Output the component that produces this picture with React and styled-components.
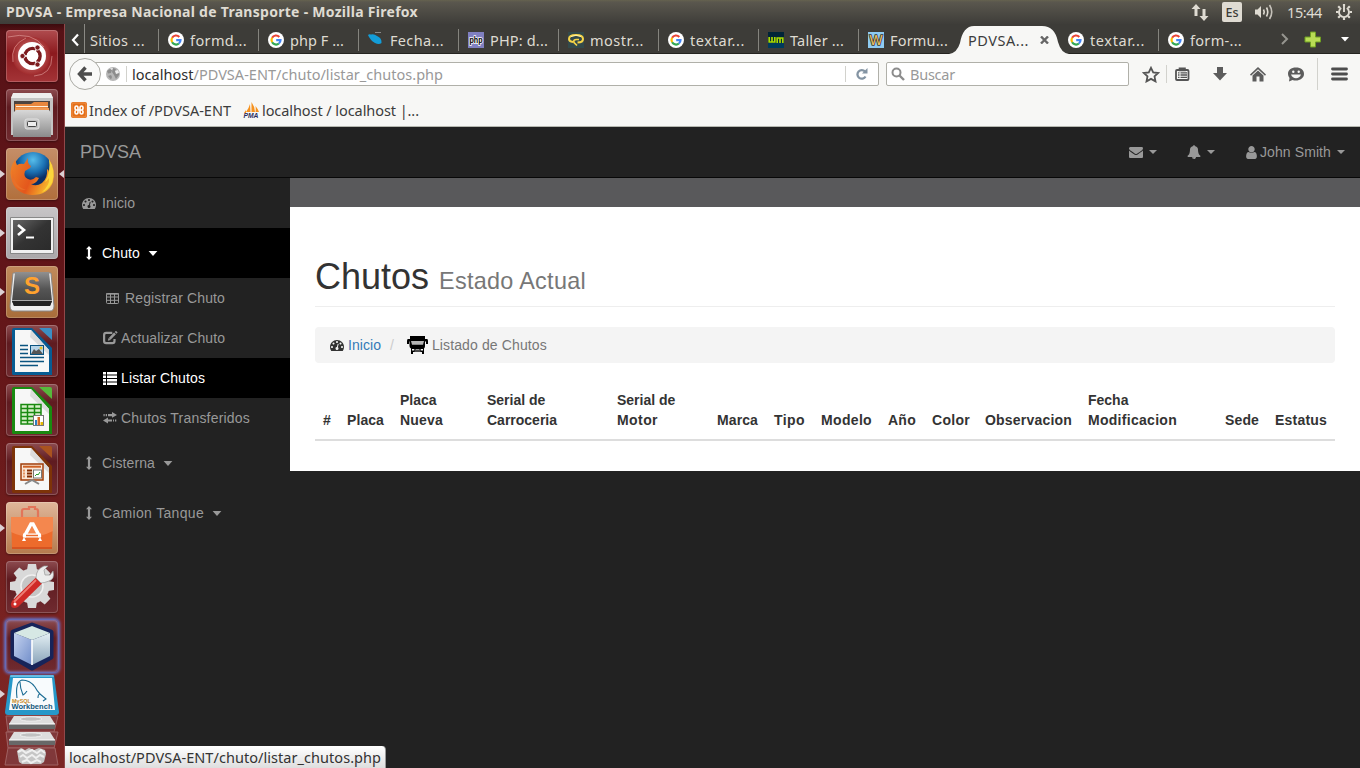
import React, { useLayoutEffect, useRef, useState } from "react";
import styled, { createGlobalStyle } from "styled-components";

const Global = createGlobalStyle`
  * { box-sizing: border-box; }
  html, body { margin: 0; padding: 0; overflow: hidden; background: #222; }
  body { font-family: "Liberation Sans", Arial, sans-serif; font-size: 14px; line-height: 20px; color: #333; }
  svg { display: block; flex: none; }
`;

const UI = `"Noto Sans", "Open Sans", sans-serif`;

const FitSpan = styled.span`
  display: inline-block;
  white-space: pre;
  flex: none;
`;

/* Spreads its letters so that the label occupies the given width. */
function Fit({ w, children, ...rest }) {
  const ref = useRef(null);
  const [ls, setLs] = useState(0);
  useLayoutEffect(() => {
    const natural = ref.current.getBoundingClientRect().width;
    setLs((w - natural) / ref.current.textContent.length);
  }, []);
  return (
    <FitSpan ref={ref} style={{ letterSpacing: ls }} {...rest}>
      {children}
    </FitSpan>
  );
}

/* ---------- desktop shell ---------- */
const Desktop = styled.div`
  width: 1360px;
  height: 768px;
  display: flex;
  flex-direction: column;
  background: #222;
  position: relative;
`;
const TopPanel = styled.header`
  height: 24px;
  flex: none;
  display: flex;
  align-items: center;
  justify-content: space-between;
  padding: 0 8px 0 6px;
  background: linear-gradient(#65624f 0, #5a574e 2px, #3e3d39 100%);
  color: #dfdbd2;
  font-family: ${UI};
  font-size: 14.5px;
`;
const PanelTitle = styled.div`
  font-weight: 700;
  font-size: 14px;
  color: #dfdbd2;
`;
const Indicators = styled.div`
  display: flex;
  align-items: center;
`;
const Keyboard = styled.div`
  width: 20px;
  height: 20px;
  margin: 0 12px 0 13px;
  border-radius: 2px;
  background: #dfdbd2;
  color: #3c3b37;
  font-size: 12.5px;
  font-weight: 500;
  line-height: 21px;
  text-align: center;
`;
const Clock = styled.div`
  margin: 0 14px 0 12px;
`;
const Body = styled.div`
  display: flex;
  height: 744px;
`;

/* ---------- launcher ---------- */
const Launcher = styled.aside`
  width: 65px;
  flex: none;
  padding: 6px 0 0 6px;
  display: flex;
  flex-direction: column;
  gap: 7px;
  border-right: 1px solid #91484a;
  background: linear-gradient(#3c0b0e 0, #571216 7px, #5f1519 25%, #661719 50%, #7b2422 85%, #7b2624 100%);
`;
const Tile = styled.div`
  position: relative;
  width: 52px;
  height: 52px;
  flex: none;
  border-radius: 4px;
  background: ${(p) => p.$bg || "linear-gradient(#8d4c50, #5f1b20 35%, #702b30)"};
  box-shadow: ${(p) =>
    p.$glow
      ? "inset 0 0 3px #8aa0ff, 0 0 3px 2px #6276cf"
      : "inset 0 0 0 1px rgba(255,255,255,.2), 0 1px 2px rgba(0,0,0,.35)"};
  svg { width: 52px; height: 52px; }
`;
const Pip = styled.i`
  position: absolute;
  top: 22px;
  ${(p) => (p.$right ? "right: -6px; border-right: 5px solid #dcd0d4;" : "left: -6px; border-left: 5px solid #dcd0d4;")}
  border-top: 4px solid transparent;
  border-bottom: 4px solid transparent;
`;
const Folded = styled.div`
  margin: -6px 0 0 -3px;
  height: 95px;
  svg { overflow: visible; }
`;

/* ---------- firefox chrome ---------- */
const Browser = styled.main`
  width: 1295px;
  display: flex;
  flex-direction: column;
`;
const TabStrip = styled.div`
  height: 30px;
  flex: none;
  display: flex;
  background: #3d3c38;
  border-bottom: 1px solid #252420;
  font-family: ${UI};
  font-size: 14.5px;
  color: #dfdbd2;
`;
const ScrollLeft = styled.div`
  width: 20px;
  display: flex;
  align-items: center;
  padding: 2px 0 0 6px;
  border-right: 1px solid #8a8984;
`;
const Tab = styled.div`
  position: relative;
  width: ${(p) => p.$w || 100}px;
  display: flex;
  align-items: center;
  gap: 6px;
  padding: 2px 0 0 ${(p) => p.$pad ?? 9}px;
  color: ${(p) => (p.$active ? "#3c3c3c" : "#dfdbd2")};
  &::after {
    content: "";
    position: absolute;
    right: 0;
    top: 5px;
    width: 1px;
    height: 22px;
    background: ${(p) => (p.$line ? "#85847e" : "transparent")};
  }
  > * { position: relative; }
`;
const TabShape = styled.svg`
  && { position: absolute; left: -10px; top: 2px; }
`;
const TabTools = styled.div`
  flex: 1;
  display: flex;
  align-items: center;
  padding: 1px 0 0 21px;
`;
const Chrome = styled.div`
  height: 73px;
  flex: none;
  background: #f7f7f5;
  border-bottom: 1px solid #b6b8b0;
  font-family: ${UI};
  font-size: 14.5px;
  color: #3c3c3c;
`;
const NavRow = styled.div`
  height: 40px;
  display: flex;
  align-items: center;
  padding-left: 4px;
`;
const Back = styled.div`
  position: relative;
  z-index: 1;
  width: 32px;
  height: 32px;
  border: 1px solid #aaaaa4;
  border-radius: 50%;
  background: #f9f9f8;
  display: flex;
  align-items: center;
  justify-content: center;
`;
const Field = styled.div`
  height: 24px;
  width: ${(p) => p.$w}px;
  margin-left: ${(p) => p.$ml}px;
  display: flex;
  align-items: center;
  padding-left: ${(p) => p.$pl}px;
  border: 1px solid #b0b0a9;
  border-radius: 2px;
  background: #fff;
  color: #999;
`;
const Host = styled.span`
  color: #2e2e2e;
`;
const Divider = styled.i`
  width: 1px;
  height: ${(p) => p.$h}px;
  background: #d2d2cd;
  margin: ${(p) => p.$m};
`;
const Tools = styled.div`
  display: flex;
  align-items: center;
  padding-left: 13px;
`;
const Tool = styled.div`
  margin-left: ${(p) => p.$ml}px;
`;
const BookRow = styled.div`
  height: 32px;
  display: flex;
  align-items: center;
  padding-left: 6px;
`;
const Bookmark = styled.div`
  display: flex;
  align-items: center;
  gap: 2px;
  height: 31px;
  margin-right: 12px;
`;

/* ---------- web page ---------- */
const Navbar = styled.nav`
  height: 51px;
  flex: none;
  display: flex;
  align-items: center;
  justify-content: space-between;
  padding-left: 15px;
  background: #222;
  border-bottom: 1px solid #080808;
  color: #999;
`;
const Brand = styled.div`
  font-size: 18px;
`;
const NavItems = styled.div`
  display: flex;
`;
const NavItem = styled.div`
  display: flex;
  align-items: center;
  height: 50px;
  padding: 0 15px;
`;
const UserSlot = styled.span`
  width: 13px;
  display: flex;
  justify-content: center;
`;
const UserName = styled.span`
  margin-left: 2px;
`;
const Caret = styled.i`
  border-top: 4px solid currentColor;
  border-left: 4px solid transparent;
  border-right: 4px solid transparent;
  margin-left: 6px;
`;
const PageBody = styled.div`
  display: flex;
  align-items: flex-start;
`;
const Side = styled.div`
  width: 225px;
  color: #999;
`;
const SideRow = styled.div`
  height: ${(p) => (p.$sub ? 40 : 50)}px;
  padding-left: ${(p) => (p.$sub ? 38 : 15)}px;
  display: flex;
  align-items: center;
  gap: 4px;
  background: ${(p) => (p.$on ? "#000" : "transparent")};
  color: ${(p) => (p.$on ? "#fff" : "#999")};
`;
const MenuCaret = styled.svg`
  margin-left: 4px;
`;
const IconBox = styled.span`
  width: ${(p) => (p.$fw ? 18 : 14)}px;
  display: flex;
  justify-content: center;
`;
const Wrapper = styled.div`
  width: 1070px;
  border-top: 29px solid #59595b;
  background: #fff;
  height: 293px;
  padding: 50px 25px 0;
`;
const PageHeader = styled.h1`
  margin: 0 0 20px;
  height: 50px;
  line-height: 40px;
  font-size: 36px;
  font-weight: 400;
  border-bottom: 1px solid #eee;
  small { font-size: 23.4px; color: #777; }
`;
const Crumbs = styled.div`
  height: 36px;
  display: flex;
  align-items: center;
  padding-left: 15px;
  background: #f4f4f4;
  border-radius: 4px;
  color: #777;
`;
const CrumbIcon = styled.span`
  color: #333;
`;
const Link = styled.span`
  color: #337ab7;
  margin-left: 4px;
`;
const Slash = styled.span`
  color: #ccc;
  margin: 0 13px 0 9px;
`;
const Listado = styled.span`
  margin-left: 4px;
`;
const TableHead = styled.div`
  display: grid;
  grid-template-columns: 24px 53px 87px 130px 100px 57px 47px 67px 44px 53px 103px 137px 50px 68px;
  margin-top: 19px;
  height: 59px;
  align-items: end;
  border-bottom: 2px solid #ddd;
`;
const Th = styled.div`
  font-weight: 700;
  padding: 8px 0 9px 8px;
  line-height: 20px;
  white-space: pre;
`;
const Status = styled.div`
  position: absolute;
  left: 65px;
  bottom: 0;
  width: 321px;
  height: 22px;
  padding-left: 4px;
  background: linear-gradient(#fff, #dedede);
  border-right: 1px solid #999;
  border-top-right-radius: 4px;
  font-family: ${UI};
  font-size: 14.5px;
  line-height: 22px;
  color: #333;
`;

/* ---------- icons ---------- */
const Fa = ({ d, s = 14 }) => (
  <svg width={s} height={s} viewBox="0 0 1792 1792" fill="currentColor">
    <path d={d} />
  </svg>
);
const ENV = "M1792 710v794q0 66-47 113t-113 47h-1472q-66 0-113-47t-47-113v-794q44 49 101 87 362 246 497 345 57 42 92.5 65.5t94.5 48 110 24.5h2q51 0 110-24.5t94.5-48 92.5-65.5q170-123 498-345 57-39 100-87zm0-294q0 79-49 151t-122 123q-376 261-468 325-10 7-42.5 31t-54 38.5-52 32.5-57.5 27-50 9h-2q-23 0-50-9t-57.5-27-52-32.5-54-38.5-42.5-31q-91-64-262-182.5t-205-142.5q-62-42-117-115.5t-55-136.5q0-78 41.5-130t118.5-52h1472q65 0 112.5 47t47.5 113z";
const BELL = "M912 1696q0-16-16-16-59 0-101.5-42.5t-42.5-101.5q0-16-16-16t-16 16q0 73 51.5 124.5t124.5 51.5q16 0 16-16zm816-288q0 52-38 90t-90 38h-448q0 106-75 181t-181 75-181-75-75-181h-448q-52 0-90-38t-38-90q50-42 91-88t85-119.5 74.5-158.5 50-206 19.5-260q0-152 117-282.5t307-158.5q-8-19-8-39 0-40 28-68t68-28 68 28 28 68q0 20-8 39 190 28 307 158.5t117 282.5q0 139 19.5 260t50 206 74.5 158.5 85 119.5 91 88z";
const USER = "M1536 1399q0 109-62.5 187t-150.5 78h-854q-88 0-150.5-78t-62.5-187q0-85 8.5-160.5t31.5-152 58.5-131 94-89 134.5-34.5q131 128 313 128t313-128q76 0 134.5 34.5t94 89 58.5 131 31.5 152 8.5 160.5zm-256-887q0 159-112.5 271.5t-271.5 112.5-271.5-112.5-112.5-271.5 112.5-271.5 271.5-112.5 271.5 112.5 112.5 271.5z";
const DASH = "M384 1152q0-53-37.5-90.5t-90.5-37.5-90.5 37.5-37.5 90.5 37.5 90.5 90.5 37.5 90.5-37.5 37.5-90.5zm192-448q0-53-37.5-90.5t-90.5-37.5-90.5 37.5-37.5 90.5 37.5 90.5 90.5 37.5 90.5-37.5 37.5-90.5zm428 481l101-382q6-26-7.5-48.5t-38.5-29.5-48 6.5-30 39.5l-101 382q-60 5-107 43.5t-63 98.5q-20 77 20 146t117 89 146-20 89-117q16-60-6-117t-72-91zm660-33q0-53-37.5-90.5t-90.5-37.5-90.5 37.5-37.5 90.5 37.5 90.5 90.5 37.5 90.5-37.5 37.5-90.5zm-640-640q0-53-37.5-90.5t-90.5-37.5-90.5 37.5-37.5 90.5 37.5 90.5 90.5 37.5 90.5-37.5 37.5-90.5zm448 192q0-53-37.5-90.5t-90.5-37.5-90.5 37.5-37.5 90.5 37.5 90.5 90.5 37.5 90.5-37.5 37.5-90.5zm320 448q0 261-141 483-19 29-54 29h-1402q-35 0-54-29-141-221-141-483 0-182 71-348t191-286 286-191 348-71 348 71 286 191 191 286 71 348z";

const DownCaret = () => (
  <MenuCaret width="10" height="5" viewBox="0 0 10 5" fill="currentColor">
    <path d="M.6 0H9.400L5 4.900Z" />
  </MenuCaret>
);
const ArrowsV = () => (
  <svg width="6" height="14" viewBox="0 0 6 14" fill="currentColor">
    <path d="M3 0L6 3.3H4.1V10.7H6L3 14L0 10.7H1.9V3.3H0Z" />
  </svg>
);
const TableIcon = () => (
  <svg width="13" height="11" viewBox="0 0 13 11" fill="none" stroke="currentColor">
    <rect x=".5" y=".5" width="12" height="10" rx="1" />
    <path d="M0 1H13" strokeWidth="1.4" />
    <path d="M.5 4H12.5M.5 7.3H12.5M4.5 1V10.5M8.5 1V10.5" />
  </svg>
);
const EditIcon = () => (
  <svg width="15" height="14" viewBox="0 0 15 14" fill="none" stroke="currentColor">
    <path d="M9.3 1.9H3.2Q1.1 1.9 1.1 4V10.1Q1.1 12.2 3.2 12.2H9.4Q11.5 12.2 11.5 10.1V8" strokeWidth="2.2" />
    <path d="M6.7 7.8L12 2.4" strokeWidth="2.6" />
    <path d="M12.6 1.8L13.8.6" strokeWidth="2.4" />
    <path d="M4.8 9.8L5.6 7L7.7 9Z" fill="currentColor" stroke="none" />
  </svg>
);
const ListIcon = () => (
  <svg width="14" height="13" viewBox="0 0 14 13" fill="currentColor">
    <path d="M0 0H3V2.500H0zM4 0H14V2.500H4zM0 3.500H3V6H0zM4 3.500H14V6H4zM0 7H3V9.500H0zM4 7H14V9.500H4zM0 10.500H3V13H0zM4 10.500H14V13H4z" />
  </svg>
);
const Transfer = () => (
  <svg width="14" height="12" viewBox="0 0 14 12" fill="currentColor">
    <path d="M9 0L14 3L9 5.800V4.2H5V2H9zM.5 2H1.700V4.200H.5zM2.700 2H4V4.2H2.700zM5 5.600V7.400H9V9.600H5V11.600L0 8.500zM10 7.400H11V9.600H10zM12 7.400H13.3V9.600H12z" />
  </svg>
);
const Truck = () => (
  <svg width="21" height="18" viewBox="0 0 21 18">
    <path d="M3 0H18V3H20Q21 3 21 5V8H19V5.500H18V10Q18 11.500 17 12.500V18H15V16H6V18H4V12.500Q2.500 11.500 2.500 10V5.500H2V8H0V5Q0 3 1 3H3Z" />
    <path d="M4 5H17L16 8.800H5Z" fill="#b5b5b5" />
    <path d="M5 13H7.500L7 14.500H5zM13.500 13H16V14.500H14z" fill="#f4f4f4" />
    <path d="M8.500 13.500H12.500M7.500 15H13.500" stroke="#ddd" strokeWidth=".7" />
  </svg>
);
const Google = () => (
  <svg width="16" height="16" viewBox="0 0 16 16" fill="none" strokeWidth="2.2">
    <circle cx="8" cy="8" r="8" fill="#fff" />
    <path d="M11.3 4.9A4.5 4.5 0 0 0 4.1 5.8" stroke="#ea4335" />
    <path d="M4.1 5.8A4.6 4.6 0 0 0 4.1 10.2" stroke="#fbbc05" />
    <path d="M4.1 10.2A4.5 4.5 0 0 0 10.9 11.5" stroke="#34a853" />
    <path d="M10.9 11.5A4.4 4.4 0 0 0 12.5 8.1H8.2" stroke="#4285f4" />
  </svg>
);
const PlumeIcon = () => (
  <svg width="16" height="16" viewBox="0 0 16 16">
    <path d="M0 3Q1 2 3 2.500Q6 1.500 9 4Q14 6 13.500 11Q11 13 7 11Q2 8 0 3Z" fill="#139dd8" />
    <path d="M7 .5H13" stroke="#888" />
  </svg>
);
const PhpIcon = () => (
  <svg width="16" height="16" viewBox="0 0 16 16">
    <rect width="16" height="16" fill="#8080c0" />
    <text x="8" y="10.500" fontSize="9" textAnchor="middle" fontFamily="Liberation Sans" fontWeight="700" textLength="13" lengthAdjust="spacingAndGlyphs" fill="#000" stroke="#fff" strokeWidth="1.6" paintOrder="stroke">php</text>
  </svg>
);
const CloudIcon = () => (
  <svg width="16" height="16" viewBox="0 0 16 16" fill="none">
    <rect width="16" height="16" fill="#32494b" />
    <path d="M5 10Q1 9.500 1 7Q1 3 8 3Q15 3 15 7Q15 10.500 9.500 10.500" stroke="#f7d447" strokeWidth="2" />
    <path d="M9 13.500L6 10.500Q5 7.500 8.500 7.500H11" stroke="#f7d447" strokeWidth="1.700" />
    <path d="M3 4.500Q8 2 13 4.500" stroke="#fff2a8" />
  </svg>
);
const WmIcon = () => (
  <svg width="16" height="16" viewBox="0 0 16 16" fill="none">
    <rect width="16" height="16" fill="#002438" />
    <rect y="11" width="16" height="5" fill="#003b5c" />
    <path d="M1.200 5V10H6.800V5M4 5V10M9.200 11V6H14.800V11M12 6V11" stroke="#a8d800" strokeWidth="1.700" />
  </svg>
);
const WIcon = () => (
  <svg width="16" height="16" viewBox="0 0 16 16">
    <rect width="16" height="16" fill="#8ecbf2" />
    <text x="8" y="13" fontSize="14" textAnchor="middle" fontFamily="Liberation Sans" textLength="13" lengthAdjust="spacingAndGlyphs" fill="#f0c460" stroke="#333" strokeWidth="1.600" paintOrder="stroke">W</text>
  </svg>
);
const GlobeIcon = () => (
  <svg width="14" height="14" viewBox="0 0 14 14">
    <circle cx="7" cy="7" r="7" fill="#b6b6b6" />
    <path d="M1 4L4 2L6 3L5 6L2 6.500zM7 1L10 2L9 4L11 6L13 5V8L10 12L8 8L6 5zM2 9L5 8L6 10L5 12.500z" fill="#8c8c8c" />
    <path d="M4 1.500L7 1L6 3zM9 4L12 3L13 6L10 7z" fill="#eee" />
  </svg>
);
const Xampp = () => (
  <svg width="16" height="16" viewBox="0 0 16 16" fill="none">
    <rect width="16" height="16" rx="2" fill="#e46f19" />
    <rect x="1" y="1" width="14" height="14" rx="2" stroke="#ef9148" />
    <path d="M7 8H5.500Q4 8 4 6V5.500Q4 4 5.500 4Q7 4 7 6V10Q7 12 5.500 12Q4 12 4 10.500V10Q4 8 5.500 8H10.500Q12 8 12 6V5.500Q12 4 10.500 4Q9 4 9 6V10Q9 12 10.500 12Q12 12 12 10.500V10Q12 8 10.500 8" stroke="#fff" strokeWidth="1.600" />
  </svg>
);
const Pma = () => (
  <svg width="17" height="16" viewBox="0 0 17 16">
    <path d="M3 10Q6 6 7 2L7.500 10zM8.500 10V0Q12 5 12 10zM12.500 10Q13 7 12.500 4Q15 7 16 10zM1 11L3 8V11z" fill="#f6921e" />
    <text x="8" y="15.500" fontSize="6.500" textAnchor="middle" fontStyle="italic" fontFamily="Liberation Sans" fontWeight="700" textLength="15" lengthAdjust="spacingAndGlyphs" fill="#2b2d5e">PMA</text>
  </svg>
);

/* ---------- launcher art ---------- */
const Dash = () => (
  <svg viewBox="0 0 52 52" fill="none">
    <defs>
      <radialGradient id="sw"><stop offset=".3" stopColor="#d98b89" /><stop offset="1" stopColor="#a32b2c" /></radialGradient>
    </defs>
    <path d="M8 34A19 19 0 0 1 28 7Q46 10 44 29Q42 43 24 45Q12 43 8 34Z" fill="url(#sw)" opacity=".75" />
    <path d="M7 32Q4 15 20 8M46 26Q46 45 28 46M2 7Q26 1 38 17" stroke="#e5a3a0" strokeOpacity=".6" />
    <circle cx="26" cy="26" r="14" fill="#fff" />
    <circle cx="26.500" cy="26" r="7.600" stroke="#7c1b1e" strokeWidth="3.400" />
    <path d="M26.500 26L15 26M26.500 26L32.500 15.500M26.500 26L32.500 36.500" stroke="#fff" strokeWidth="1.300" />
    <g fill="#7c1b1e" stroke="#fff" strokeWidth=".8"><circle cx="16.500" cy="26" r="2.600" /><circle cx="31.500" cy="17.500" r="2.600" /><circle cx="31.500" cy="34.500" r="2.600" /></g>
    <circle cx="26.500" cy="26" r="5.700" fill="#fff" />
  </svg>
);
const Files = () => (
  <svg viewBox="0 0 52 52">
    <defs><linearGradient id="fl" x2="0" y2="1"><stop stopColor="#d8d8d8" /><stop offset="1" stopColor="#8b8b8b" /></linearGradient></defs>
    <path d="M7 5H45L47 9V46H5V9Z" fill="#c4c4c4" />
    <path d="M7 4H45L47 9H5Z" fill="#eee" />
    <path d="M8 12H44V24H8Z" fill="#4d4440" />
    <path d="M9 15H25L28 13H42V22H9Z" fill="#e8873e" /><path d="M10 17H42V18H10Z" fill="#fff0dc" /><path d="M9 19H43V23H9Z" fill="#f09a55" />
    <path d="M7 24L10 21H43L45 24V48H7Z" fill="url(#fl)" />
    <rect x="19" y="30" width="14" height="10" rx="2" fill="#c3c3c3" stroke="#e2e2e2" />
    <rect x="21.500" y="32.500" width="9" height="5" rx="1" fill="#eee" stroke="#444" />
  </svg>
);
const FirefoxArt = () => (
  <svg viewBox="0 0 52 52">
    <defs>
      <radialGradient id="fb" cx=".5" cy=".2"><stop stopColor="#57bdea" /><stop offset=".6" stopColor="#1a70b3" /><stop offset="1" stopColor="#0b2f66" /></radialGradient>
      <linearGradient id="fo" x2="1" y2=".4"><stop stopColor="#f0862a" /><stop offset=".6" stopColor="#e4571c" /><stop offset="1" stopColor="#f6b52c" /></linearGradient>
    </defs>
    <circle cx="27" cy="24" r="20" fill="url(#fb)" />
    <path d="M43 11Q50 22 47 34Q42 47 26 47Q8 46 5 29Q3 20 9 12L11 17Q14 15 18 16L22 10Q21 16 25 18L24 20L19 23Q17 29 22 31Q26 33 30 29L33 30Q30 36 25 36Q30 39 36 35Q42 30 41 21Q43 22 43 24Q45 17 43 11Z" fill="url(#fo)" />
    <path d="M43 11Q50 22 46 35Q41 43 36 44Q44 37 43 30Q41 33 39 34Q45 24 43 11Z" fill="#fbd63c" />
    <path d="M7 22Q7 38 20 42Q12 43 6 33Z" fill="#e8702a" />
  </svg>
);
const Term = () => (
  <svg viewBox="0 0 52 52">
    <defs><linearGradient id="tm" x2="1" y2="1"><stop stopColor="#666" /><stop offset=".5" stopColor="#333" /><stop offset="1" stopColor="#2b2b2b" /></linearGradient></defs>
    <rect x="4" y="10" width="44" height="37" rx="1" fill="#888" /><rect x="5" y="11" width="42" height="35" fill="#f0f0f0" />
    <rect x="7" y="13" width="38" height="30" fill="url(#tm)" />
    <path d="M12 18L18 23L12 28" fill="none" stroke="#fff" strokeWidth="2.600" /><path d="M20 30.500H28" stroke="#fff" strokeWidth="2" />
  </svg>
);
const Sublime = () => (
  <svg viewBox="0 0 52 52">
    <defs><linearGradient id="sb" x2="0" y2="1"><stop stopColor="#909090" /><stop offset=".5" stopColor="#555" /><stop offset="1" stopColor="#3f3f3f" /></linearGradient></defs>
    <path d="M7 7L4 40Q4 45 8 45H44Q48 45 48 40L45 7Z" fill="#eee" stroke="#888" />
    <path d="M9 6H43L46 35L44 40H8L6 35Z" fill="url(#sb)" /><path d="M6 35H46L44 40H8Z" fill="#222" /><path d="M6 34.500H46" stroke="#aaa" />
    <text x="26" y="28" fontSize="24" fontWeight="700" fontFamily="Liberation Sans" textAnchor="middle" fill="#ffa22e">S</text>
  </svg>
);
const Office = ({ c, d, children }) => (
  <svg viewBox="0 0 52 52">
    <path d="M7 3H26L46 23V50H7Q6 50 6 48V5Q6 3 8 3Z" fill={d} />
    <path d="M33 3H44Q46 3 46 5V15Z" fill={c} /><path d="M9 5H25L43 25V47H9Z" fill="#f7f7f7" />
    <path d="M25 5L43 25V30L24 12Z" fill="#dcdcdc" />
    {children}
  </svg>
);
const Writer = () => (
  <Office c="#3c8fc4" d="#075c93">
    <path d="M14 20.500H22M14 24.500H22M14 28.500H22M14 32.500H38M14 36.500H38M14 40.500H32" stroke="#0b5480" strokeWidth="1.700" />
    <rect x="24.500" y="20.500" width="13" height="9" fill="#b7d4e8" stroke="#0b5480" /><path d="M25 29L28 24L30 26L33 24L37 29Z" fill="#555" /><circle cx="35" cy="23" r="1.500" fill="#e6c020" />
  </Office>
);
const Calc = () => (
  <Office c="#57b83c" d="#198a10">
    <path d="M15 20.500H35V40H15ZM15 24.500H35M15 28.500H35M15 32.500H35M15 36.500H35M21.500 20.500V40M28.500 20.500V40" fill="#d7efc9" stroke="#198a10" strokeWidth="1.500" />
    <rect x="27.500" y="31.500" width="10" height="10" fill="#fff" stroke="#777" /><path d="M29 36H31V41H29z" fill="#2f7fc1" /><path d="M31.500 33H34V41H31.500z" fill="#d46a22" /><path d="M34.500 38H37V41H34.500z" fill="#e5b800" />
  </Office>
);
const Impress = () => (
  <Office c="#a9531f" d="#7d3308">
    <rect x="15" y="21" width="22" height="16" fill="#fae6d6" stroke="#a03d08" strokeWidth="1.500" /><path d="M17 23.700H35" stroke="#cd6124" strokeWidth="2" />
    <path d="M17 27.500H19M17 30.500H19M17 33.500H19" stroke="#e49462" strokeWidth="2" /><path d="M21 27.500H26M21 30.500H26M21 33.500H26" stroke="#822d02" strokeWidth="2" />
    <rect x="27.500" y="27" width="8" height="8" fill="#fff" stroke="#777" /><path d="M29 33L31 31L32 32L34 29" stroke="#2c9c2c" fill="none" /><path d="M19 41L26 37L33 41" stroke="#888" fill="none" strokeWidth="2" />
  </Office>
);
const Store = () => (
  <svg viewBox="0 0 52 52">
    <path d="M16 17V9Q16 7 18 7H23V5H29V7H30Q32 7 32 9V17" fill="none" stroke="#e2755a" strokeWidth="2.200" />
    <path d="M5 15H47L46 47H6Z" fill="#ed6b2c" /><path d="M5 15H47V29Q25 40 5 30Z" fill="#f4874e" /><path d="M6 46H46" stroke="#d75421" strokeWidth="2" />
    <path d="M18 35L25 22H27L34 35" fill="none" stroke="#fff" strokeWidth="3.500" /><path d="M17 33.500H35" stroke="#fff" strokeWidth="4" /><path d="M20 33.500H32" stroke="#ed6b2c" strokeWidth="1.500" /><path d="M16 39H20L18 35zM32 39H36L34 35z" fill="#fff" />
  </svg>
);
const Settings = () => (
  <svg viewBox="0 0 52 52">
    <g transform="translate(26 25)" fill="#d9d9d9">
      {[0, 45, 90, 135, 180, 225, 270, 315].map((a) => <path key={a} d="M-5-16L-4-22H4L5-16Z" transform={`rotate(${a})`} />)}
      <circle r="17.500" /><circle r="11" fill="#c6c6c6" stroke="#f0f0f0" strokeWidth="1.500" />
    </g>
    <path d="M6 40L30 16.500L36 22.500L12 46Q8 48 5.500 46Q4 43 6 40Z" fill="#cf2a27" /><path d="M8 41L30 19" stroke="#ee7d74" strokeWidth="1.800" /><circle cx="9" cy="43" r="1.500" fill="#fff" />
    <path d="M30 17Q30 8 38 5L42 5L38 9L39 14L44 14L47 10Q49 18 43 20Q38 22 35 22Z" fill="#ececec" stroke="#999" strokeWidth=".7" />
  </svg>
);
const Netbeans = () => (
  <svg viewBox="0 0 52 52">
    <defs>
      <linearGradient id="n1" x2="1" y2="1"><stop stopColor="#c5d3ef" /><stop offset="1" stopColor="#6f8cc9" /></linearGradient>
      <linearGradient id="n2" x2="0" y2="1"><stop stopColor="#e4f0f4" /><stop offset="1" stopColor="#89a3b9" /></linearGradient>
    </defs>
    <path d="M26 5L45 12V37L26 48L7 37V12Z" fill="#17245a" stroke="#17245a" strokeWidth="5" strokeLinejoin="round" />
    <path d="M8 13L26 20V45L8 36Z" fill="url(#n1)" /><path d="M44 13L26 20V45L44 36Z" fill="url(#n2)" /><path d="M26 6L44 13L26 20L8 13Z" fill="#d6e8e4" /><path d="M26 20V45" stroke="#fff" strokeWidth="2" strokeOpacity=".8" />
  </svg>
);
const Stack = () => (
  <svg width="60" height="95" viewBox="0 0 60 95">
    <path d="M-3 17L2 21L-3 25Z" fill="#dcd0d4" />
    <path d="M7 2H51L56 39Q56 42 53 42H5Q2 42 2 39Z" fill="#2798c9" />
    <path d="M8 2H50L51 4H7Z" fill="#67c3e6" />
    <path d="M10 5H49L52 37H6Z" fill="#f8fbfd" />
    <path d="M14 25Q12 9 19 7Q27 7 32 14Q34 18 37 21Q35 21 35 25M37 21L43 26L40 28M17 9Q17 15 20 22Q22 21 24 18" fill="none" stroke="#1d6d94" strokeWidth="1.100" />
    <text x="9" y="29.500" fontSize="5.500" fontFamily="Liberation Sans" fontWeight="700" fill="#c78a2a">MySQL</text>
    <text x="8.500" y="36" fontSize="6.500" fontFamily="Liberation Sans" fontWeight="700" fill="#14587b" textLength="41" lengthAdjust="spacingAndGlyphs">Workbench</text>
    <path d="M3 43H55L51 59H5Z" fill="#80383a" stroke="#9f6263" />
    <path d="M11 43H47L52 51V55H6V51Z" fill="#ddd" /><path d="M6 51H52V56H6Z" fill="#686868" /><path d="M6 51H52" stroke="#fff" /><ellipse cx="28" cy="46" rx="11" ry="2.200" fill="#c1c1c1" stroke="#eee" />
    <path d="M3 59H55L51 75H5Z" fill="#80383a" stroke="#9f6263" />
    <path d="M11 59H47L52 67V71H6V67Z" fill="#ddd" /><path d="M6 67H52V72H6Z" fill="#686868" /><path d="M6 67H52" stroke="#fff" /><ellipse cx="28" cy="62" rx="11" ry="2.200" fill="#c1c1c1" stroke="#eee" />
    <path d="M5 75H52L55 92H2Z" fill="#80383a" stroke="#9f6263" />
    <path d="M14 78L18 75L22 77L26 75L31 77L36 75L42 77L43 81L41 89L38 91H19L16 89Z" fill="#c5c5c5" />
    <path d="M15 79L19 77L23 80L29 77L34 80L38 77L42 80M17 84L20 82L24 85L29 82L33 85L37 82L41 84M19 89L24 87L28 90L34 87L38 89" fill="none" stroke="#efefef" strokeWidth="2" />
  </svg>
);

const tan = "linear-gradient(#c08a5c, #a86d3a)";
const apps = [
  { art: <Dash />, bg: "linear-gradient(#b04c4f, #8c1a1e 45%, #a43437)" },
  { art: <Files /> },
  { art: <FirefoxArt />, bg: "linear-gradient(#c58e68, #b16f3c)", run: true, focus: true },
  { art: <Term />, bg: "linear-gradient(#c7c5c7, #aaa7a9)", run: true },
  { art: <Sublime />, bg: tan, run: true },
  { art: <Writer /> },
  { art: <Calc /> },
  { art: <Impress /> },
  { art: <Store />, bg: "linear-gradient(#e0b79a, #b57a4d)", run: true },
  { art: <Settings /> },
  { art: <Netbeans />, glow: true },
];

const tabs = [
  { t: "Sitios ...", w: 55, tab: 74, pad: 5 },
  { t: "formd...", w: 57, i: <Google /> },
  { t: "php F ...", w: 54, i: <Google /> },
  { t: "Fecha...", w: 54, i: <PlumeIcon /> },
  { t: "PHP: d...", w: 58, i: <PhpIcon /> },
  { t: "mostr...", w: 54, i: <CloudIcon /> },
  { t: "textar...", w: 55, i: <Google /> },
  { t: "Taller ...", w: 54, i: <WmIcon /> },
  { t: "Formu...", w: 58, i: <WIcon />, plain: true },
  { t: "PDVSA...", w: 61, active: true, plain: true },
  { t: "textar...", w: 55, i: <Google /> },
  { t: "form-...", w: 52, i: <Google />, plain: true },
];

const heads = [["#", 8], ["Placa", 37], ["Placa\nNueva", 43], ["Serial de\nCarroceria", 70], ["Serial de\nMotor", 41], ["Marca", 41], ["Tipo", 31], ["Modelo", 51], ["Año", 28], ["Color", 38], ["Observacion", 87], ["Fecha\nModificacion", 89], ["Sede", 34], ["Estatus", 52]];

export default function App() {
  return (
    <Desktop>
      <Global />
      <TopPanel>
        <PanelTitle><Fit w={412}>PDVSA - Empresa Nacional de Transporte - Mozilla Firefox</Fit></PanelTitle>
        <Indicators>
          <svg width="18" height="17" viewBox="0 0 18 17" fill="#dfdbd2"><path d="M5 0L9.500 5H6.500V12H3.500V5H.5ZM13 17L8.500 12H11.500V5H14.500V12H17.500Z" /></svg>
          <Keyboard>Es</Keyboard>
          <svg width="21" height="16" viewBox="0 0 21 16" fill="none" stroke="#dfdbd2" strokeWidth="1.600">
            <path d="M1 5.500H3.500L7 2V14L3.500 10.500H1Z" fill="#dfdbd2" stroke="none" />
            <path d="M9.500 5.500Q11 8 9.500 10.500M12.500 3.500Q15 8 12.500 12.500" /><path d="M15.500 1Q20 8 15.500 15" stroke="#c5c1b9" />
          </svg>
          <Clock><Fit w={35}>15:44</Fit></Clock>
          <svg width="16" height="16" viewBox="0 0 16 16" fill="none" stroke="#dfdbd2">
            <path d="M5.200 4A5 5 0 1 0 10.800 4M8 2V8" strokeWidth="1.900" />
            <path d="M8 0V2M8 13.500V16M0 8H2.500M13.500 8H16M2.200 2.200L4 4M13.800 2.200L12 4M2.200 13.800L4 12M13.800 13.800L12 12" strokeWidth="2.200" />
          </svg>
        </Indicators>
      </TopPanel>
      <Body>
        <Launcher>
          {apps.map((a, i) => (
            <Tile key={i} $bg={a.bg} $glow={a.glow}>
              {a.art}
              {a.run && <Pip />}
              {a.focus && <Pip $right />}
            </Tile>
          ))}
          <Folded><Stack /></Folded>
        </Launcher>
        <Browser>
          <TabStrip>
            <ScrollLeft>
              <svg width="8" height="14" viewBox="0 0 8 14" fill="none" stroke="#fff" strokeWidth="2.200"><path d="M7 1.500L2 7L7 12.500" /></svg>
            </ScrollLeft>
            {tabs.map((t, i) => (
              <Tab key={i} $w={t.tab} $pad={t.active ? 9 : t.pad} $active={t.active} $line={!t.plain}>
                {t.active && (
                  <TabShape width="120" height="28" viewBox="0 0 120 28"><path d="M0 28Q8 27 11 17Q14 0 25 0H93Q106 0 109 16Q112 27 120 28Z" fill="#f7f7f5" /></TabShape>
                )}
                {t.i}
                <Fit w={t.w}>{t.t}</Fit>
                {t.active && (
                  <svg width="18" height="8" viewBox="0 0 18 8" stroke="#666" strokeWidth="2.400"><path d="M6 .5L13 7.500M13 .5L6 7.500" /></svg>
                )}
              </Tab>
            ))}
            <TabTools>
              <svg width="9" height="12" viewBox="0 0 9 12" fill="none" stroke="#96958f" strokeWidth="2"><path d="M2 1L7 6L2 11" /></svg>
              <svg width="51" height="17" viewBox="0 0 51 17"><path d="M21.500 1H26.500V6H31.500V11H26.500V16H21.500V11H16V6H21.500Z" fill="#b9dd55" stroke="#6f9e22" /></svg>
              <svg width="10" height="6" viewBox="0 0 10 6"><path d="M1 1H9L5 5.500Z" fill="#fff" /></svg>
            </TabTools>
          </TabStrip>
          <Chrome>
            <NavRow>
              <Back>
                <svg width="16" height="16" viewBox="0 0 16 16" fill="none" stroke="#4d4d4d" strokeWidth="3.400"><path d="M8.500 1.500L2.500 8L8.500 14.500M2.500 8H15" /></svg>
              </Back>
              <Field $w={786} $ml={-8} $pl={12}>
                <GlobeIcon />
                <Divider $h={16} $m="0 5px 0 6px" />
                <Fit w={311}><Host>localhost</Host>/PDVSA-ENT/chuto/listar_chutos.php</Fit>
                <Divider $h={16} $m="0 10px 0 402px" />
                <svg width="12" height="12" viewBox="0 0 12 12" fill="none" stroke="#8494a3" strokeWidth="2.300"><path d="M9.500 8.500A4.300 4.300 0 1 1 9 3.500" /><path d="M11.500 0V5.500H6Z" fill="#8494a3" stroke="none" /></svg>
              </Field>
              <Field $w={243} $ml={7} $pl={4}>
                <svg width="15" height="14" viewBox="0 0 15 14" fill="none" stroke="#8c8c8c" strokeWidth="2"><circle cx="5.500" cy="5.500" r="4" /><path d="M8.500 8.500L13 13" strokeWidth="2.400" /></svg>
                <Tool $ml={4}><Fit w={45}>Buscar</Fit></Tool>
              </Field>
              <Tools>
                <svg width="18" height="17" viewBox="0 0 18 17" fill="none" stroke="#555" strokeWidth="1.800"><path d="M9 1.800L11.200 6.400L16.200 7L12.500 10.400L13.500 15.400L9 12.900L4.500 15.400L5.500 10.400L1.800 7L6.800 6.400Z" /></svg>
                <Divider $h={18} $m="0 8px 0 6px" />
                <svg width="15" height="14" viewBox="0 0 15 14" fill="none" stroke="#555"><rect x="1" y="3" width="12.500" height="10" rx="1" strokeWidth="1.800" /><path d="M4.500 1.300H10V3.500H4.500Z" strokeWidth="1.600" /><path d="M3 5.800H4.500M5.500 5.800H12M3 8H4.500M5.500 8H12M3 10.300H4.500M5.500 10.300H12" strokeWidth="1.300" /></svg>
                <Tool $ml={23}>
                  <svg width="14" height="14" viewBox="0 0 14 14"><path d="M4 0H10V6H14L7 13.500L0 6H4Z" fill="#5c5c5c" /></svg>
                </Tool>
                <Tool $ml={23}>
                  <svg width="16" height="15" viewBox="0 0 16 15" fill="#5c5c5c"><path d="M8 0L16 7.500L15 8.800L8 2.300L1 8.800L0 7.500ZM8 3.500L13.500 8.500V14.500H9.500V9.500H6.500V14.500H2.500V8.500Z" /></svg>
                </Tool>
                <Tool $ml={22}>
                  <svg width="16" height="15" viewBox="0 0 16 15"><path d="M8 .5C13 .5 16 3 16 7S12 13.500 8 13.500Q6 13.500 4.500 13L1 14.500L1.500 11Q0 9 0 7C0 3 3 .5 8 .5Z" fill="#5c5c5c" /><circle cx="5.300" cy="4.800" r="1.200" fill="#f7f7f5" /><circle cx="10.700" cy="4.800" r="1.200" fill="#f7f7f5" /><path d="M3 7.500H13Q11.500 11.300 8 11.300T3 7.500Z" fill="#f7f7f5" /></svg>
                </Tool>
                <Divider $h={32} $m="0 13px" />
                <svg width="17" height="14" viewBox="0 0 17 14" stroke="#4d4d4d" strokeWidth="2.800" strokeLinecap="round"><path d="M1.500 2H15.500M1.500 7H15.500M1.500 12H15.500" /></svg>
              </Tools>
            </NavRow>
            <BookRow>
              <Bookmark><Xampp /><Fit w={142}>Index of /PDVSA-ENT</Fit></Bookmark>
              <Bookmark><Pma /><Fit w={157}>localhost / localhost |...</Fit></Bookmark>
            </BookRow>
          </Chrome>
          <Navbar>
            <Brand><Fit w={61}>PDVSA</Fit></Brand>
            <NavItems>
              <NavItem><Fa d={ENV} /><Caret /></NavItem>
              <NavItem><Fa d={BELL} /><Caret /></NavItem>
              <NavItem><UserSlot><Fa d={USER} s={15} /></UserSlot><UserName><Fit w={71}>John Smith</Fit></UserName><Caret /></NavItem>
            </NavItems>
          </Navbar>
          <PageBody>
            <Side>
              <SideRow><IconBox $fw><Fa d={DASH} /></IconBox><Fit w={33}>Inicio</Fit></SideRow>
              <SideRow $on><IconBox $fw><ArrowsV /></IconBox><Fit w={38}>Chuto</Fit><DownCaret /></SideRow>
              <SideRow $sub><IconBox $fw><TableIcon /></IconBox><Fit w={100}>Registrar Chuto</Fit></SideRow>
              <SideRow $sub><IconBox><EditIcon /></IconBox><Fit w={104}>Actualizar Chuto</Fit></SideRow>
              <SideRow $sub $on><IconBox><ListIcon /></IconBox><Fit w={84}>Listar Chutos</Fit></SideRow>
              <SideRow $sub><IconBox><Transfer /></IconBox><Fit w={129}>Chutos Transferidos</Fit></SideRow>
              <SideRow><IconBox $fw><ArrowsV /></IconBox><Fit w={53}>Cisterna</Fit><DownCaret /></SideRow>
              <SideRow><IconBox $fw><ArrowsV /></IconBox><Fit w={102}>Camion Tanque</Fit><DownCaret /></SideRow>
            </Side>
            <Wrapper>
              <PageHeader><Fit w={114}>Chutos</Fit> <small><Fit w={147}>Estado Actual</Fit></small></PageHeader>
              <Crumbs>
                <CrumbIcon><Fa d={DASH} /></CrumbIcon>
                <Link><Fit w={33}>Inicio</Fit></Link>
                <Slash>/</Slash>
                <Truck />
                <Listado><Fit w={115}>Listado de Chutos</Fit></Listado>
              </Crumbs>
              <TableHead>
                {heads.map(([h, w]) => (
                  <Th key={h}>
                    {h.includes("\n") ? (
                      <>{h.split("\n")[0]}<br /><Fit w={w}>{h.split("\n")[1]}</Fit></>
                    ) : (
                      <Fit w={w}>{h}</Fit>
                    )}
                  </Th>
                ))}
              </TableHead>
            </Wrapper>
          </PageBody>
        </Browser>
      </Body>
      <Status><Fit w={312}>localhost/PDVSA-ENT/chuto/listar_chutos.php</Fit></Status>
    </Desktop>
  );
}
